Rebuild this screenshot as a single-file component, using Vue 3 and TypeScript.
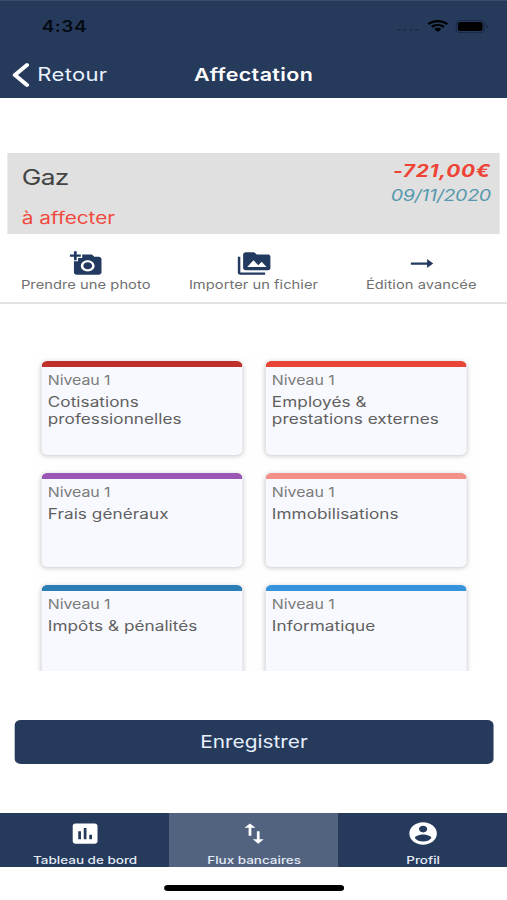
<script setup lang="ts">
interface Category {
  name: string
  tone: string
}

const categories: Category[] = [
  { name: 'Cotisations professionnelles', tone: 'crimson' },
  { name: 'Employés & prestations externes', tone: 'red' },
  { name: 'Frais généraux', tone: 'purple' },
  { name: 'Immobilisations', tone: 'salmon' },
  { name: 'Impôts & pénalités', tone: 'blue' },
  { name: 'Informatique', tone: 'sky' },
]
</script>

<template>
  <div class="viewport">
    <div class="screen">
      <header class="header">
        <div class="status">
          <span class="time">4:34</span>
          <div class="indicators">
            <span class="dots"><i></i><i></i><i></i><i></i></span>
            <svg class="wifi" viewBox="0 0 17 12">
              <path d="M8.5 0C5.2 0 2.2 1.3 0 3.4l1.5 1.6C3.300 3.300 5.800 2.300 8.500 2.300s5.200 1 7 2.700L17 3.400C14.800 1.300 11.800 0 8.500 0Z" />
              <path d="M8.500 3.900c-2.200 0-4.200.9-5.700 2.300l1.600 1.600c1-1 2.500-1.700 4.100-1.700s3.100.7 4.100 1.700l1.600-1.600C12.700 4.800 10.700 3.900 8.500 3.900Z" />
              <path d="M8.500 7.700c-1.200 0-2.200.5-2.900 1.200L8.500 12l2.900-3.100C10.700 8.200 9.700 7.700 8.500 7.700Z" />
            </svg>
            <svg class="battery" viewBox="0 0 27 13">
              <rect x=".5" y=".5" width="23" height="12" rx="3.500" fill="none" stroke="#192845" />
              <rect x="2" y="2" width="20" height="9" rx="1.800" fill="#000" />
              <path d="M25 4.500v4c1.800-.8 1.800-3.200 0-4Z" fill="#192845" />
            </svg>
          </div>
        </div>
        <nav class="navbar">
          <div class="back">
            <svg class="chevron" viewBox="0 0 14 24"><path d="M12 2 2.200 12 12 22" /></svg>
            <span class="back-label">Retour</span>
          </div>
          <h1 class="title">Affectation</h1>
          <span></span>
        </nav>
      </header>

      <section class="operation">
        <div class="operation-left">
          <span class="label">Gaz</span>
          <span class="state">à affecter</span>
        </div>
        <div class="operation-right">
          <span class="amount">-721,00€</span>
          <span class="date">09/11/2020</span>
        </div>
      </section>

      <section class="actions">
        <div class="action">
          <svg class="action-icon" viewBox="0 0 24 24">
            <path d="M3 4V1h2v3h3v2H5v3H3V6H0V4h3Zm3 6V7h3V4h7l1.830 2H21c1.100 0 2 .9 2 2v12c0 1.100-.9 2-2 2H5c-1.100 0-2-.9-2-2V10h3Zm7 9c2.760 0 5-2.240 5-5s-2.240-5-5-5-5 2.240-5 5 2.240 5 5 5Zm-3.200-5c0 1.770 1.430 3.200 3.200 3.200s3.200-1.430 3.200-3.200-1.430-3.200-3.200-3.200-3.200 1.430-3.200 3.200Z" />
          </svg>
          <span class="action-label">Prendre une photo</span>
        </div>
        <div class="action">
          <svg class="action-icon" viewBox="0 0 24 24">
            <path d="M2 6H0v14c0 1.100.9 2 2 2h18v-2H2V6Zm20-2h-8l-2-2H6c-1.100 0-1.990.9-1.990 2L4 16c0 1.100.9 2 2 2h16c1.100 0 2-.9 2-2V6c0-1.100-.9-2-2-2ZM7 15l4.500-6 3.500 4.510 2.500-3.010L21 15H7Z" />
          </svg>
          <span class="action-label">Importer un fichier</span>
        </div>
        <div class="action">
          <svg class="action-icon" viewBox="0 0 24 24">
            <path d="M4 11h11.800V8l4.400 4-4.400 4v-3H4Z" />
          </svg>
          <span class="action-label">Édition avancée</span>
        </div>
      </section>

      <main class="categories">
        <article v-for="category in categories" :key="category.name" class="card" :class="category.tone">
          <div class="card-body">
            <span class="level">Niveau 1</span>
            <span class="name">{{ category.name }}</span>
          </div>
        </article>
      </main>

      <button class="save" type="button">Enregistrer</button>

      <nav class="tabs">
        <div class="tab">
          <svg class="tab-icon" viewBox="0 0 24 24">
            <path d="M19 3H5c-1.100 0-2 .9-2 2v14c0 1.100.9 2 2 2h14c1.100 0 2-.9 2-2V5c0-1.100-.9-2-2-2ZM9 17H7v-7h2v7Zm4 0h-2V7h2v10Zm4 0h-2v-4h2v4Z" />
          </svg>
          <span class="tab-label">Tableau de bord</span>
        </div>
        <div class="tab active">
          <svg class="tab-icon" viewBox="0 0 24 24">
            <path d="M16 17.010V10h-2v7.010h-3L15 21l4-3.990h-3ZM9 3 5 6.990h3V14h2V6.990h3L9 3Z" />
          </svg>
          <span class="tab-label">Flux bancaires</span>
        </div>
        <div class="tab">
          <svg class="tab-icon" viewBox="0 0 24 24">
            <path d="M12 2C6.480 2 2 6.480 2 12s4.480 10 10 10 10-4.480 10-10S17.520 2 12 2Zm0 3c1.660 0 3 1.340 3 3s-1.340 3-3 3-3-1.340-3-3 1.340-3 3-3Zm0 14.200c-2.500 0-4.710-1.280-6-3.220.03-1.990 4-3.080 6-3.080 1.990 0 5.970 1.090 6 3.080-1.290 1.940-3.500 3.220-6 3.220Z" />
          </svg>
          <span class="tab-label">Profil</span>
        </div>
      </nav>
      <footer class="home"><span class="home-bar"></span></footer>
    </div>
  </div>
</template>

<style>
body {
  margin: 0;
  background: #fff;
}
</style>

<style scoped>
* {
  box-sizing: border-box;
}

.viewport {
  width: 507px;
  height: 900px;
  overflow: hidden;
}

/* The phone canvas is 414 points wide and is widened to fill the viewport. */
.screen {
  display: flex;
  flex-direction: column;
  width: 414px;
  height: 900px;
  transform: scaleX(1.22464);
  transform-origin: 0 0;
  background: #fff;
  font-family: Inter, "Liberation Sans", sans-serif;
}

.header {
  height: 98px;
  background: #263a5c;
  border-top: 1px solid #3a4c6c;
  flex: none;
}

.status {
  display: flex;
  justify-content: space-between;
  align-items: center;
  height: 50px;
  padding: 0 15px 0 34px;
}

.time {
  font-size: 15.500px;
  font-weight: 600;
  letter-spacing: 0.400px;
  color: #050a12;
}

.indicators {
  display: flex;
  align-items: center;
}

.dots {
  display: flex;
  gap: 2px;
  padding-top: 8px;
  margin-right: 7px;
}

.dots i {
  width: 3px;
  height: 2px;
  border-radius: 1px;
  background: #1e2f4e;
}

.wifi {
  width: 17px;
  height: 12px;
  margin-right: 6px;
}

.battery {
  width: 27px;
  height: 13px;
}

.navbar {
  display: grid;
  grid-template-columns: 1fr auto 1fr;
  align-items: center;
  height: 47px;
  padding: 0 10px;
  color: #fff;
}

.back {
  display: flex;
  align-items: center;
}

.chevron {
  width: 14px;
  height: 24px;
  margin-right: 6.500px;
  fill: none;
  stroke: #fff;
  stroke-width: 3.600;
  stroke-linecap: round;
  stroke-linejoin: round;
}

.back-label {
  font-size: 18px;
  letter-spacing: 0.250px;
  color: #eaf2ff;
}

.title {
  margin: 0;
  font-size: 17.500px;
  font-weight: 600;
  line-height: 20px;
  letter-spacing: 0.300px;
}

.operation {
  display: flex;
  justify-content: space-between;
  flex: none;
  height: 81px;
  margin: 55px 5.700px 0 6.300px;
  padding: 0 7.500px 0 11.500px;
  background: #e0e0e0;
}

.operation-left,
.operation-right {
  display: flex;
  flex-direction: column;
}

.operation-left {
  padding-top: 10px;
}

.label {
  font-size: 21.500px;
  line-height: 28px;
  letter-spacing: -0.600px;
  color: #444;
}

.state {
  margin-top: 16px;
  font-size: 17px;
  line-height: 22px;
  letter-spacing: -0.050px;
  color: #f04a3e;
}

.operation-right {
  align-items: flex-end;
  padding-top: 6px;
  font-style: italic;
}

.amount {
  font-size: 17px;
  font-weight: 700;
  line-height: 24px;
  letter-spacing: 0.600px;
  color: #ee4335;
}

.date {
  font-size: 16px;
  line-height: 25px;
  letter-spacing: -0.250px;
  color: #5698ad;
}

.actions {
  display: flex;
  flex: none;
  height: 70px;
  padding: 16px 1.500px 0;
  border-bottom: 2px solid #e4e4e4;
}

.action {
  display: flex;
  flex: 1;
  flex-direction: column;
  align-items: center;
}

.action-icon {
  width: 27px;
  height: 27px;
  fill: #233a60;
}

.action-label {
  font-size: 12px;
  line-height: 16px;
  letter-spacing: 0.030px;
  color: #707070;
  white-space: nowrap;
}

.categories {
  display: grid;
  grid-template-columns: 164px 164px;
  grid-auto-rows: 94px;
  gap: 18px 19px;
  flex: none;
  height: 317px;
  margin: 50px 27px 0;
  padding: 7px 7px 0;
  overflow: hidden;
  background: #fefefe;
  align-content: start;
}

.card {
  border-radius: 5px;
  overflow: hidden;
  background: #f8f9fe;
  border-top: 6px solid;
  box-shadow: 0 1px 5px rgba(0, 0, 0, 0.220);
}

.crimson { border-color: #c0302a; }
.red { border-color: #e94537; }
.purple { border-color: #9a56b5; }
.salmon { border-color: #f19187; }
.blue { border-color: #2a7db5; }
.sky { border-color: #3594db; }

.card-body {
  display: flex;
  flex-direction: column;
  padding: 5px 5px 0;
}

.level {
  font-size: 13px;
  line-height: 16px;
  letter-spacing: -0.050px;
  color: #7c7c7c;
}

.name {
  margin-top: 5px;
  font-size: 14px;
  line-height: 17px;
  letter-spacing: 0.050px;
  color: #606060;
}

.save {
  flex: none;
  height: 44px;
  margin: 49px 11px 0 11.800px;
  padding: 0;
  border: 0;
  border-radius: 5px;
  background: #263a5c;
  font-family: inherit;
  font-size: 17px;
  color: #e8f0fc;
}

.tabs {
  display: flex;
  flex: none;
  height: 54px;
  margin-top: 49px;
  background: #263a5c;
}

.tab {
  display: flex;
  flex: 1;
  flex-direction: column;
  align-items: center;
  padding: 7px 0 0 1px;
}

.active {
  background: #52637f;
}

.tab-icon {
  width: 27px;
  height: 27px;
  fill: #fff;
}

.tab-label {
  margin-top: 6px;
  font-size: 11px;
  font-weight: 500;
  line-height: 14px;
  color: #e4ebf6;
}

.home {
  display: flex;
  justify-content: center;
  padding: 18px 0 0 1px;
}

.home-bar {
  width: 147px;
  height: 6px;
  border-radius: 3px;
  background: #000;
}
</style>
